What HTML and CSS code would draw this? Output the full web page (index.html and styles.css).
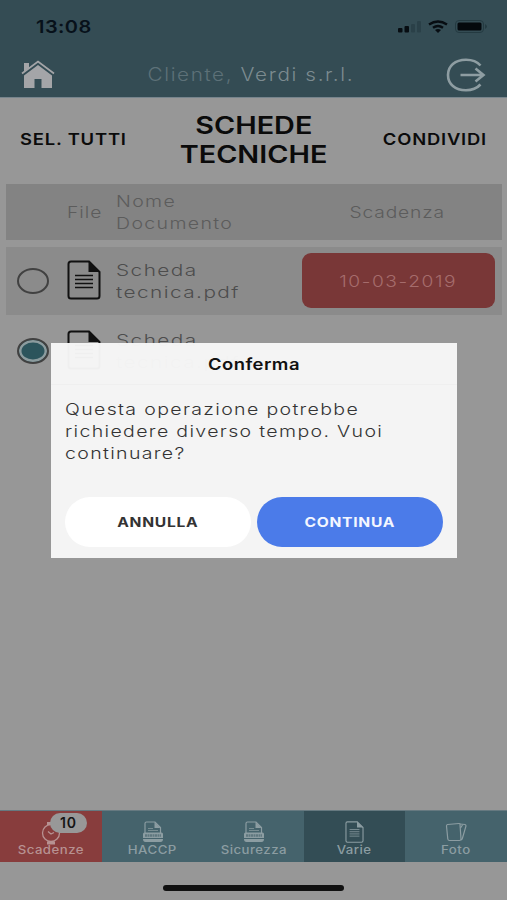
FILE: index.html
```html
<!DOCTYPE html>
<html lang="it">
   <head>
      <meta charset="UTF-8" />
      <meta name="viewport" content="width=device-width, initial-scale=1.0"/>
      <title>Schede tecniche</title>
      <link rel="stylesheet" href="styles.css">
   </head>
   <body>
      <svg width="0" height="0" class="defs">
         <symbol id="doc" viewBox="0 0 34 40">
            <path d="M22 1.5H4Q1.5 1.5 1.5 4v32q0 2.500 2.500 2.500h26q2.500 0 2.500-2.500V12z" fill="none" stroke="currentColor" stroke-width="2"/>
            <path d="M21.500 1v11H33z" fill="currentColor"/>
            <path d="M8 15.500h18M8 19.500h18M8 23.500h18M8 27.500h18" stroke="currentColor" stroke-width="1.400"/>
         </symbol>
         <symbol id="scan" viewBox="0 0 22 22">
            <path d="M3 12V2.500Q3 1 4.500 1H13l5.500 5.500V12" fill="none" stroke="currentColor" stroke-width="1.200"/>
            <path d="M12.500 1v6h6zM2.500 11.500h17q1.500 0 1.500 1.500v4H1v-4q0-1.500 1.500-1.500zM1 18h20q0 3-2.500 3h-15Q1 21 1 18z" fill="currentColor"/>
            <path d="M6 7.500h5M6 9.500h10" stroke="currentColor" stroke-width=".7"/>
            <path d="M3 14.500h16" stroke="#5f777f" stroke-width="2.500" stroke-dasharray="2 .5"/>
         </symbol>
      </svg>
      <div class="app">
         <header>
            <div class="status-bar">
               <span class="time">13:08</span>
               <svg width="92" height="16" viewBox="0 0 92 16">
                  <g fill="#070d12"><rect x="0" y="9" width="4.500" height="4.500" rx="1"/><rect x="6.500" y="7" width="4.500" height="6.500" rx="1"/></g>
                  <g fill="#2a4048"><rect x="13" y="5" width="4" height="8.500" rx="1"/><rect x="19" y="2" width="4" height="11.500" rx="1"/></g>
                  <path d="M31 5.500q9-6 18 0M35 8.800q5-3.600 10 0" fill="none" stroke="#070d12" stroke-width="2.400"/>
                  <path d="M37 11q3-2 6 0l-3 3z" fill="#070d12"/>
                  <rect x="57.500" y="1.500" width="28" height="12" rx="3.500" fill="none" stroke="#243a41"/>
                  <rect x="59.500" y="3.500" width="24" height="8" rx="1.500" fill="#04090d"/>
                  <path d="M87 5q4 2.500 0 5z" fill="#243a41"/>
               </svg>
            </div>
            <div class="nav">
               <svg width="34" height="30" viewBox="0 0 34 30" fill="#a4a5a8">
                  <path d="M3 3h5v5l-5 4z"/>
                  <path d="M1 13.500L17 1.500l16 12" fill="none" stroke="#a4a5a8" stroke-width="1.800"/>
                  <path d="M17 5L31 15.500V28H20.500v-9h-7v9H3V15.500z"/>
               </svg>
               <span class="client"><i>Cliente,</i> Verdi s.r.l.</span>
               <svg width="40" height="34" viewBox="0 0 40 34" fill="none" stroke="#8e9da2" stroke-width="2.600">
                  <path d="M34.500 7.500C31 3.500 26 1.800 20 1.800C9 1.800 2 8 2 17s7 15.200 18 15.200c6 0 11-2 14.500-5.700"/>
                  <path d="M14.500 17H37M29.500 10.500l8 6.500-8 6.500"/>
               </svg>
            </div>
         </header>
         <div class="toolbar">
            <span class="action select">SEL. TUTTI</span>
            <h1><span>SCHEDE</span><br><span>TECNICHE</span></h1>
            <span class="action share">CONDIVIDI</span>
         </div>
         <div class="row head">
            <span></span>
            <span class="file-label">File</span>
            <div class="name"><span>Nome</span><span>Documento</span></div>
            <span class="expiry">Scadenza</span>
         </div>
         <div class="row item">
            <div class="radio"></div>
            <svg class="doc-icon"><use href="#doc"/></svg>
            <div class="name"><span>Scheda</span><span>tecnica.pdf</span></div>
            <div class="date"><span>10-03-2019</span></div>
         </div>
         <div class="row item plain">
            <div class="radio checked"></div>
            <svg class="doc-icon"><use href="#doc"/></svg>
            <div class="name"><span>Scheda</span><span>tecnica.pdf</span></div>
            <div></div>
         </div>
         <nav class="tabs">
            <div class="tab alert">
               <svg width="22" height="24" viewBox="0 0 22 24" fill="none" stroke="currentColor" stroke-width="1.300">
                  <circle cx="11" cy="12" r="8.500"/>
                  <path d="M8 10.500l3 2.500 3-1.500"/>
                  <path d="M7 1h8v3H7zM7 20.500h8v3H7z" fill="currentColor" stroke="none"/>
               </svg>
               <span class="badge">10</span>
               <span class="label">Scadenze</span>
            </div>
            <div class="tab"><svg width="22" height="22"><use href="#scan"/></svg><span class="label">HACCP</span></div>
            <div class="tab"><svg width="22" height="22"><use href="#scan"/></svg><span class="label">Sicurezza</span></div>
            <div class="tab active"><svg width="19" height="22"><use href="#doc"/></svg><span class="label">Varie</span></div>
            <div class="tab">
               <svg width="22" height="22" viewBox="0 0 22 22" fill="none" stroke="currentColor" stroke-width="1.200">
                  <path d="M2.500 3.500L14 2.500Q15 2.400 15 3.500l1 14.500q0 1.500-1.500 1.500H4.500Q3 19.500 2.800 18L1.500 5q0-1.300 1-1.500z"/>
                  <path d="M15 3l5 .5q1 .3 1 1.500L17.500 17q-.4 1.500-1.500 2M15.500 7l2-3"/>
               </svg>
               <span class="label">Foto</span>
            </div>
         </nav>
         <div class="home-area"><div class="home-bar"></div></div>
      </div>
      <div class="modal">
         <div class="modal-title"><span>Conferma</span></div>
         <p><span>Questa operazione potrebbe</span><span>richiedere diverso tempo. Vuoi</span><span>continuare?</span></p>
         <div class="buttons">
            <button><span>ANNULLA</span></button>
            <button class="primary"><span>CONTINUA</span></button>
         </div>
      </div>
   </body>
</html>
```
FILE: styles.css
```css
* {
box-sizing: border-box;
}
body {
margin: 0;
width: 507px;
height: 900px;
overflow: hidden;
font-family: Inter, "Liberation Sans", sans-serif;
background: #979797;
}
.defs {
position: absolute;
}
svg {
display: block;
flex: none;
}
.app {
height: 900px;
display: flex;
flex-direction: column;
}
header {
height: 98px;
background: #344c54;
border-bottom: 1px solid #76848c;
}
.status-bar {
height: 52px;
padding: 1px 17px 0 36px;
display: flex;
align-items: center;
justify-content: space-between;
}
.time {
font-size: 17.5px;
font-weight: 600;
letter-spacing: 0.4px;
color: #07111a;
transform: scaleX(1.14);
transform-origin: left;
}
.nav {
height: 45px;
padding: 0 21px;
display: flex;
align-items: center;
justify-content: space-between;
}
.client {
font-size: 18px;
font-weight: 300;
letter-spacing: 1.4px;
color: #7c8b90;
transform: scaleX(1.15);
}
.client i {
font-style: normal;
font-weight: 300;
color: #5d7178;
}
.toolbar {
height: 86px;
padding: 0 20px;
display: grid;
grid-template-columns: 120px 1fr 120px;
align-items: center;
text-align: center;
color: #0b0b0b;
}
.action {
font-size: 16px;
font-weight: 600;
letter-spacing: 0.7px;
white-space: nowrap;
padding-bottom: 4px;
transform: scaleX(1.15);
}
.select {
text-align: left;
transform-origin: left;
}
.share {
text-align: right;
transform-origin: right;
}
h1 {
margin: 0;
padding-bottom: 2px;
font-size: 24px;
line-height: 29px;
font-weight: 600;
}
h1 span {
display: inline-block;
transform: scaleX(1.2);
}
.row {
margin: 0 5px 0 6px;
display: grid;
grid-template-columns: 61px 49px 186px 1fr;
align-items: center;
font-size: 16px;
font-weight: 300;
color: #5c5c5c;
}
.head {
height: 56px;
background: #838383;
margin-bottom: 7px;
}
.item {
height: 68px;
background: #8b8b8b;
margin-bottom: 1px;
color: #4d4d4d;
}
.plain {
height: 70px;
background: none;
}
.name {
line-height: 22px;
}
.name span {
display: block;
width: max-content;
letter-spacing: 1.1px;
transform: scaleX(1.22);
transform-origin: left;
}
.item .name span {
transform: scaleX(1.3);
}
.file-label {
letter-spacing: 0.8px;
transform: scaleX(1.2);
transform-origin: left;
}
.expiry {
text-align: center;
letter-spacing: 0.7px;
padding-right: 8px;
transform: scaleX(1.2);
}
.radio {
width: 32px;
height: 26px;
margin-left: 11px;
border: 2.5px solid #414141;
border-radius: 50%;
}
.radio.checked {
background: #2c545c;
box-shadow: inset 0 0 0 2.5px #8c9b9e;
}
.doc-icon {
width: 34px;
height: 40px;
margin-bottom: 2px;
color: #111;
}
.date {
width: 193px;
height: 55px;
margin-bottom: 1px;
border-radius: 9px;
background: #793737;
color: #a56c6c;
display: flex;
align-items: center;
justify-content: center;
letter-spacing: 1.3px;
}
.date span {
transform: scaleX(1.2);
}
.tabs {
margin-top: auto;
height: 52px;
display: grid;
grid-template-columns: 102px 101px 101px 101px 102px;
background: #45636c;
color: #8c9da2;
border-top: 1px solid #667980;
}
.tab {
position: relative;
display: flex;
flex-direction: column;
align-items: center;
justify-content: flex-end;
}
.label {
font-size: 11.5px;
line-height: 14px;
font-weight: 500;
letter-spacing: 0.4px;
padding-bottom: 5px;
transform: scaleX(1.15);
}
.alert {
background: #883d3d;
color: #b79292;
}
.alert svg {
margin-bottom: -2px;
}
.active {
background: #334d55;
}
.badge {
position: absolute;
left: 50px;
top: 2px;
width: 37px;
height: 20px;
border-radius: 10px;
background: #989898;
color: #151515;
font-size: 14px;
line-height: 20px;
font-weight: 600;
letter-spacing: 1px;
text-align: center;
}
.home-area {
height: 38px;
padding-top: 23px;
}
.home-bar {
width: 181px;
height: 6px;
margin: 0 auto;
border-radius: 3px;
background: #111;
}
.modal {
position: absolute;
left: 51px;
top: 343px;
width: 406px;
height: 215px;
background: rgba(248, 248, 248, 0.965);
}
.modal-title {
height: 42px;
display: flex;
align-items: center;
justify-content: center;
font-size: 16px;
font-weight: 600;
letter-spacing: 0.4px;
color: #111;
border-bottom: 1px solid #efefef;
}
.modal-title span {
transform: scaleX(1.15);
}
.modal p {
margin: 0;
padding: 13px 14px 0;
height: 112px;
font-size: 16px;
line-height: 22px;
font-weight: 300;
color: #333;
}
.modal p span {
display: block;
width: max-content;
letter-spacing: 1.1px;
transform: scaleX(1.22);
transform-origin: left;
}
.buttons {
display: flex;
gap: 6px;
padding: 0 14px;
}
button {
flex: 1;
height: 50px;
border: none;
border-radius: 25px;
background: #fff;
color: #333;
font-family: inherit;
font-size: 13px;
font-weight: 700;
letter-spacing: 0.6px;
}
button span {
display: inline-block;
transform: scaleX(1.2);
}
.primary {
background: #4b7be9;
color: #f3f6ff;
}
```
